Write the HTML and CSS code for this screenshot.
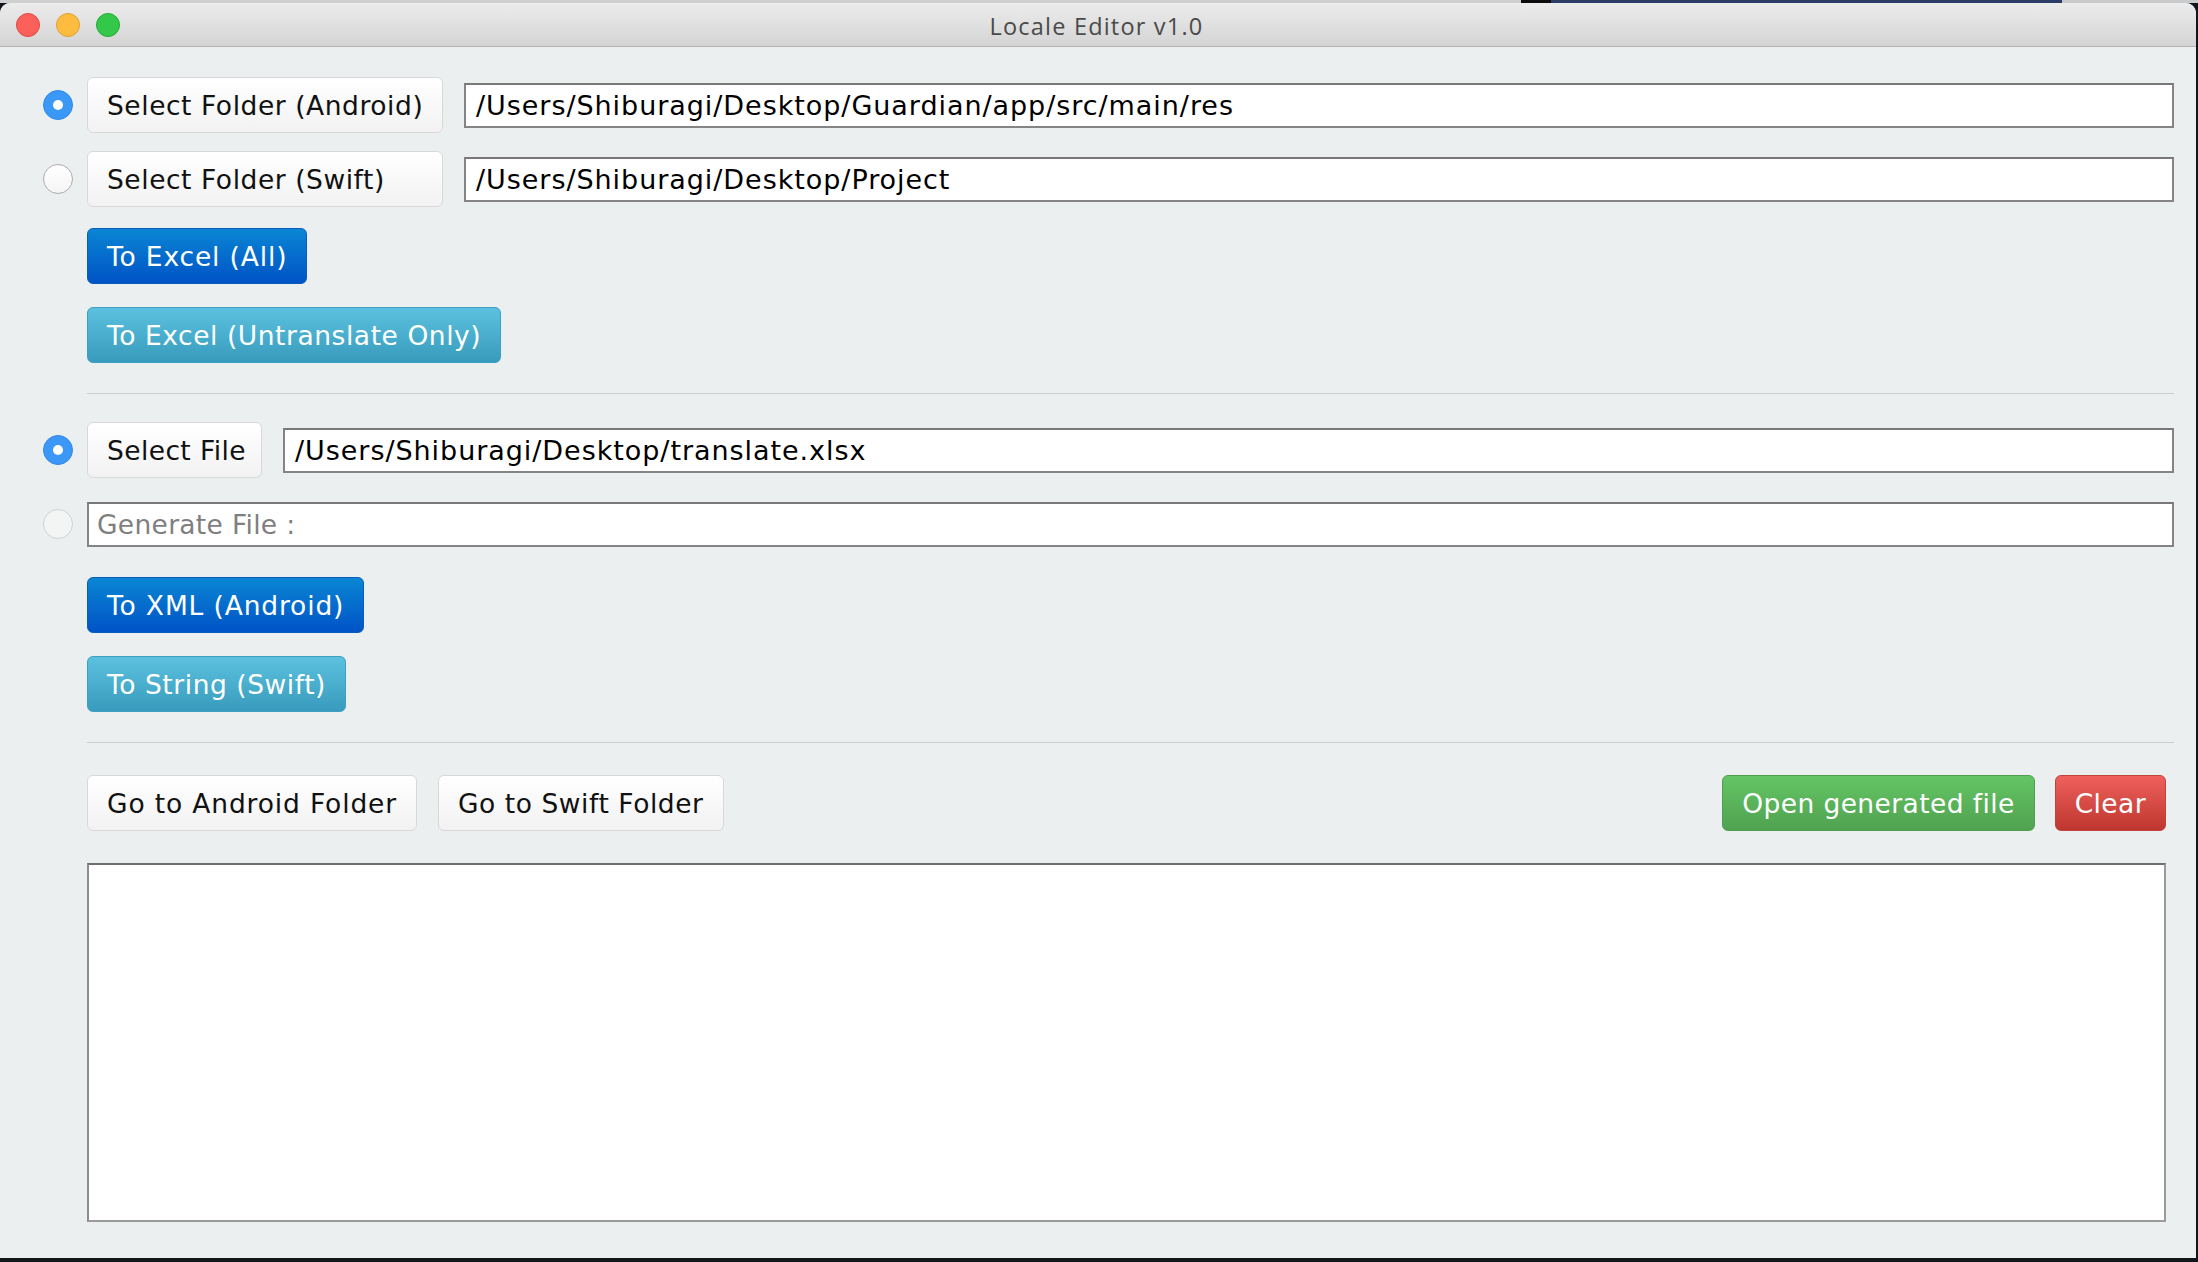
FILE: index.html
```html
<!DOCTYPE html>
<html lang="en">
<head>
<meta charset="utf-8">
<title>Locale Editor v1.0</title>
<link rel="stylesheet" href="styles.css">
</head>
<body>
<div class="screen">
  <div class="top-strip">
    <span class="strip strip-light"></span>
    <span class="strip strip-black"></span>
    <span class="strip strip-navy"></span>
    <span class="strip strip-grey"></span>
  </div>
  <div class="window">
    <div class="titlebar">
      <div class="lights">
        <span class="light red"></span>
        <span class="light yellow"></span>
        <span class="light green"></span>
      </div>
      <div class="title">Locale Editor v1.0</div>
      <div class="titlebar-spacer"></div>
    </div>

    <div class="content">
      <div class="row row-first">
        <span class="radio on"></span>
        <button class="btn btn-default btn-wide">Select Folder (Android)</button>
        <div class="field">/Users/Shiburagi/Desktop/Guardian/app/src/main/res</div>
      </div>
      <div class="row row-next">
        <span class="radio off"></span>
        <button class="btn btn-default btn-wide">Select Folder (Swift)</button>
        <div class="field">/Users/Shiburagi/Desktop/Project</div>
      </div>

      <div class="actions actions-excel">
        <button class="btn btn-primary">To Excel (All)</button>
        <button class="btn btn-info btn-tight">To Excel (Untranslate Only)</button>
      </div>

      <div class="separator sep-first"></div>

      <div class="row row-file">
        <span class="radio on"></span>
        <button class="btn btn-default btn-file">Select File</button>
        <div class="field">/Users/Shiburagi/Desktop/translate.xlsx</div>
      </div>
      <div class="row row-next">
        <span class="radio disabled"></span>
        <div class="field field-full placeholder">Generate File :</div>
      </div>

      <div class="actions actions-convert">
        <button class="btn btn-primary">To XML (Android)</button>
        <button class="btn btn-info btn-tight">To String (Swift)</button>
      </div>

      <div class="separator sep-second"></div>

      <div class="bottom-row">
        <button class="btn btn-default">Go to Android Folder</button>
        <button class="btn btn-default btn-tight">Go to Swift Folder</button>
        <div class="grow"></div>
        <button class="btn btn-success">Open generated file</button>
        <button class="btn btn-danger">Clear</button>
      </div>

      <div class="log"></div>
    </div>
  </div>
</div>
</body>
</html>
```

FILE: styles.css
```css
html, body {
  margin: 0;
  padding: 0;
}

body {
  width: 2198px;
  height: 1262px;
  overflow: hidden;
  background: #121519;
  font-family: "DejaVu Sans", "Liberation Sans", sans-serif;
}

.screen {
  width: 2198px;
  height: 1262px;
  display: flex;
  flex-direction: column;
}

.top-strip {
  height: 3px;
  display: flex;
  flex: none;
}

.strip { display: block; height: 3px; }
.strip-light { width: 1521px; background: #cfd0d1; }
.strip-black { width: 30px; background: #0d0d0f; }
.strip-navy { width: 511px; background: #2b3c66; }
.strip-grey { flex: 1; background: #c9cacc; }

.window {
  width: 2196px;
  height: 1255px;
  flex: none;
  background: #eceff0;
  border-radius: 10px 10px 0 0;
  overflow: hidden;
  display: flex;
  flex-direction: column;
}

.titlebar {
  height: 43px;
  flex: none;
  border-bottom: 1px solid #b3b3b3;
  background: linear-gradient(#ececec, #d4d4d4);
  display: grid;
  grid-template-columns: 1fr auto 1fr;
  align-items: center;
}

.lights {
  display: flex;
  gap: 16px;
  padding-left: 16px;
  align-items: center;
}

.light {
  width: 24px;
  height: 24px;
  border-radius: 50%;
  box-sizing: border-box;
  display: block;
}
.light.red { background: #fc605b; border: 1px solid #de4842; }
.light.yellow { background: #fdbc40; border: 1px solid #dea034; }
.light.green { background: #34c84a; border: 1px solid #26a934; }

.title {
  font-family: "Open Sans", "Liberation Sans", sans-serif;
  font-size: 23.5px;
  letter-spacing: 1.2px;
  color: #4a4a4a;
  margin-left: -3px;
  padding-top: 2px;
}

.content {
  flex: 1;
  display: flex;
  flex-direction: column;
  padding: 30px 22px 0 43px;
}

.row {
  display: flex;
  align-items: center;
  height: 56px;
  flex: none;
}
.row-next { margin-top: 18px; }
.row-file { margin-top: 28px; }

.radio {
  width: 30px;
  height: 30px;
  border-radius: 50%;
  box-sizing: border-box;
  margin-right: 14px;
  flex: none;
  display: flex;
  align-items: center;
  justify-content: center;
}
.radio.on {
  background: #3b98f7;
  border: 1px solid #2f89ec;
}
.radio.on::after {
  content: "";
  width: 10px;
  height: 10px;
  border-radius: 50%;
  background: #ffffff;
}
.radio.off {
  background: linear-gradient(#ffffff, #f5f5f5);
  border: 1px solid #acacac;
}
.radio.disabled {
  background: #f3f4f4;
  border: 1px solid #d0d1d2;
}

.btn {
  height: 56px;
  box-sizing: border-box;
  border-radius: 6px;
  padding: 0 19px;
  font-family: "DejaVu Sans", "Liberation Sans", sans-serif;
  font-size: 26.5px;
  letter-spacing: 0.85px;
  text-align: left;
  white-space: nowrap;
  flex: none;
  cursor: default;
}

.btn-default {
  background: linear-gradient(#ffffff, #f2f2f2);
  border: 1px solid #d8d8d8;
  color: #111111;
}
.btn-wide { width: 356px; letter-spacing: 0.55px; }
.btn-file { width: 175px; letter-spacing: 0.4px; }
.btn-tight { letter-spacing: 0.55px; }

.btn-primary {
  background: linear-gradient(#0a86d4, #0053c6);
  border: 1px solid #0a5dbd;
  color: #ffffff;
}
.btn-info {
  background: linear-gradient(#5cc1df, #389bbd);
  border: 1px solid #3f9fc2;
  color: #ffffff;
}
.btn-success {
  background: linear-gradient(#64c564, #50a250);
  border: 1px solid #4f9d4f;
  color: #ffffff;
  letter-spacing: 0.4px;
}
.btn-danger {
  background: linear-gradient(#ef605c, #be372f);
  border: 1px solid #c0423b;
  color: #ffffff;
  letter-spacing: 0.4px;
}

.field {
  flex: 1;
  height: 45px;
  box-sizing: border-box;
  margin-left: 21px;
  background: #ffffff;
  border: 2px solid #848484;
  border-top-color: #787878;
  padding: 0 10px;
  display: flex;
  align-items: center;
  font-size: 27px;
  letter-spacing: 0.95px;
  color: #000000;
  white-space: nowrap;
  overflow: hidden;
}
.field-full { margin-left: 0; padding-left: 8px; }
.placeholder { color: #7f7f7f; font-size: 26.5px; letter-spacing: 0.3px; }

.actions {
  display: flex;
  flex-direction: column;
  align-items: flex-start;
  padding-left: 44px;
  gap: 23px;
}
.actions-excel { margin-top: 21px; }
.actions-convert { margin-top: 25px; }

.separator {
  height: 1px;
  background: #c9cbcc;
  margin-left: 44px;
  flex: none;
}
.sep-first { margin-top: 30px; }
.sep-second { margin-top: 30px; }

.bottom-row {
  display: flex;
  align-items: center;
  gap: 21px;
  margin-top: 32px;
  margin-left: 44px;
  margin-right: 8px;
}
.bottom-row .btn-danger { margin-left: -1px; }
.grow { flex: 1; }

.log {
  margin-top: 32px;
  margin-left: 44px;
  margin-right: 8px;
  height: 359px;
  box-sizing: border-box;
  background: #ffffff;
  border: 2px solid #9a9a9a;
  border-top-color: #6e6e6e;
  border-left-color: #8c8c8c;
}
```
